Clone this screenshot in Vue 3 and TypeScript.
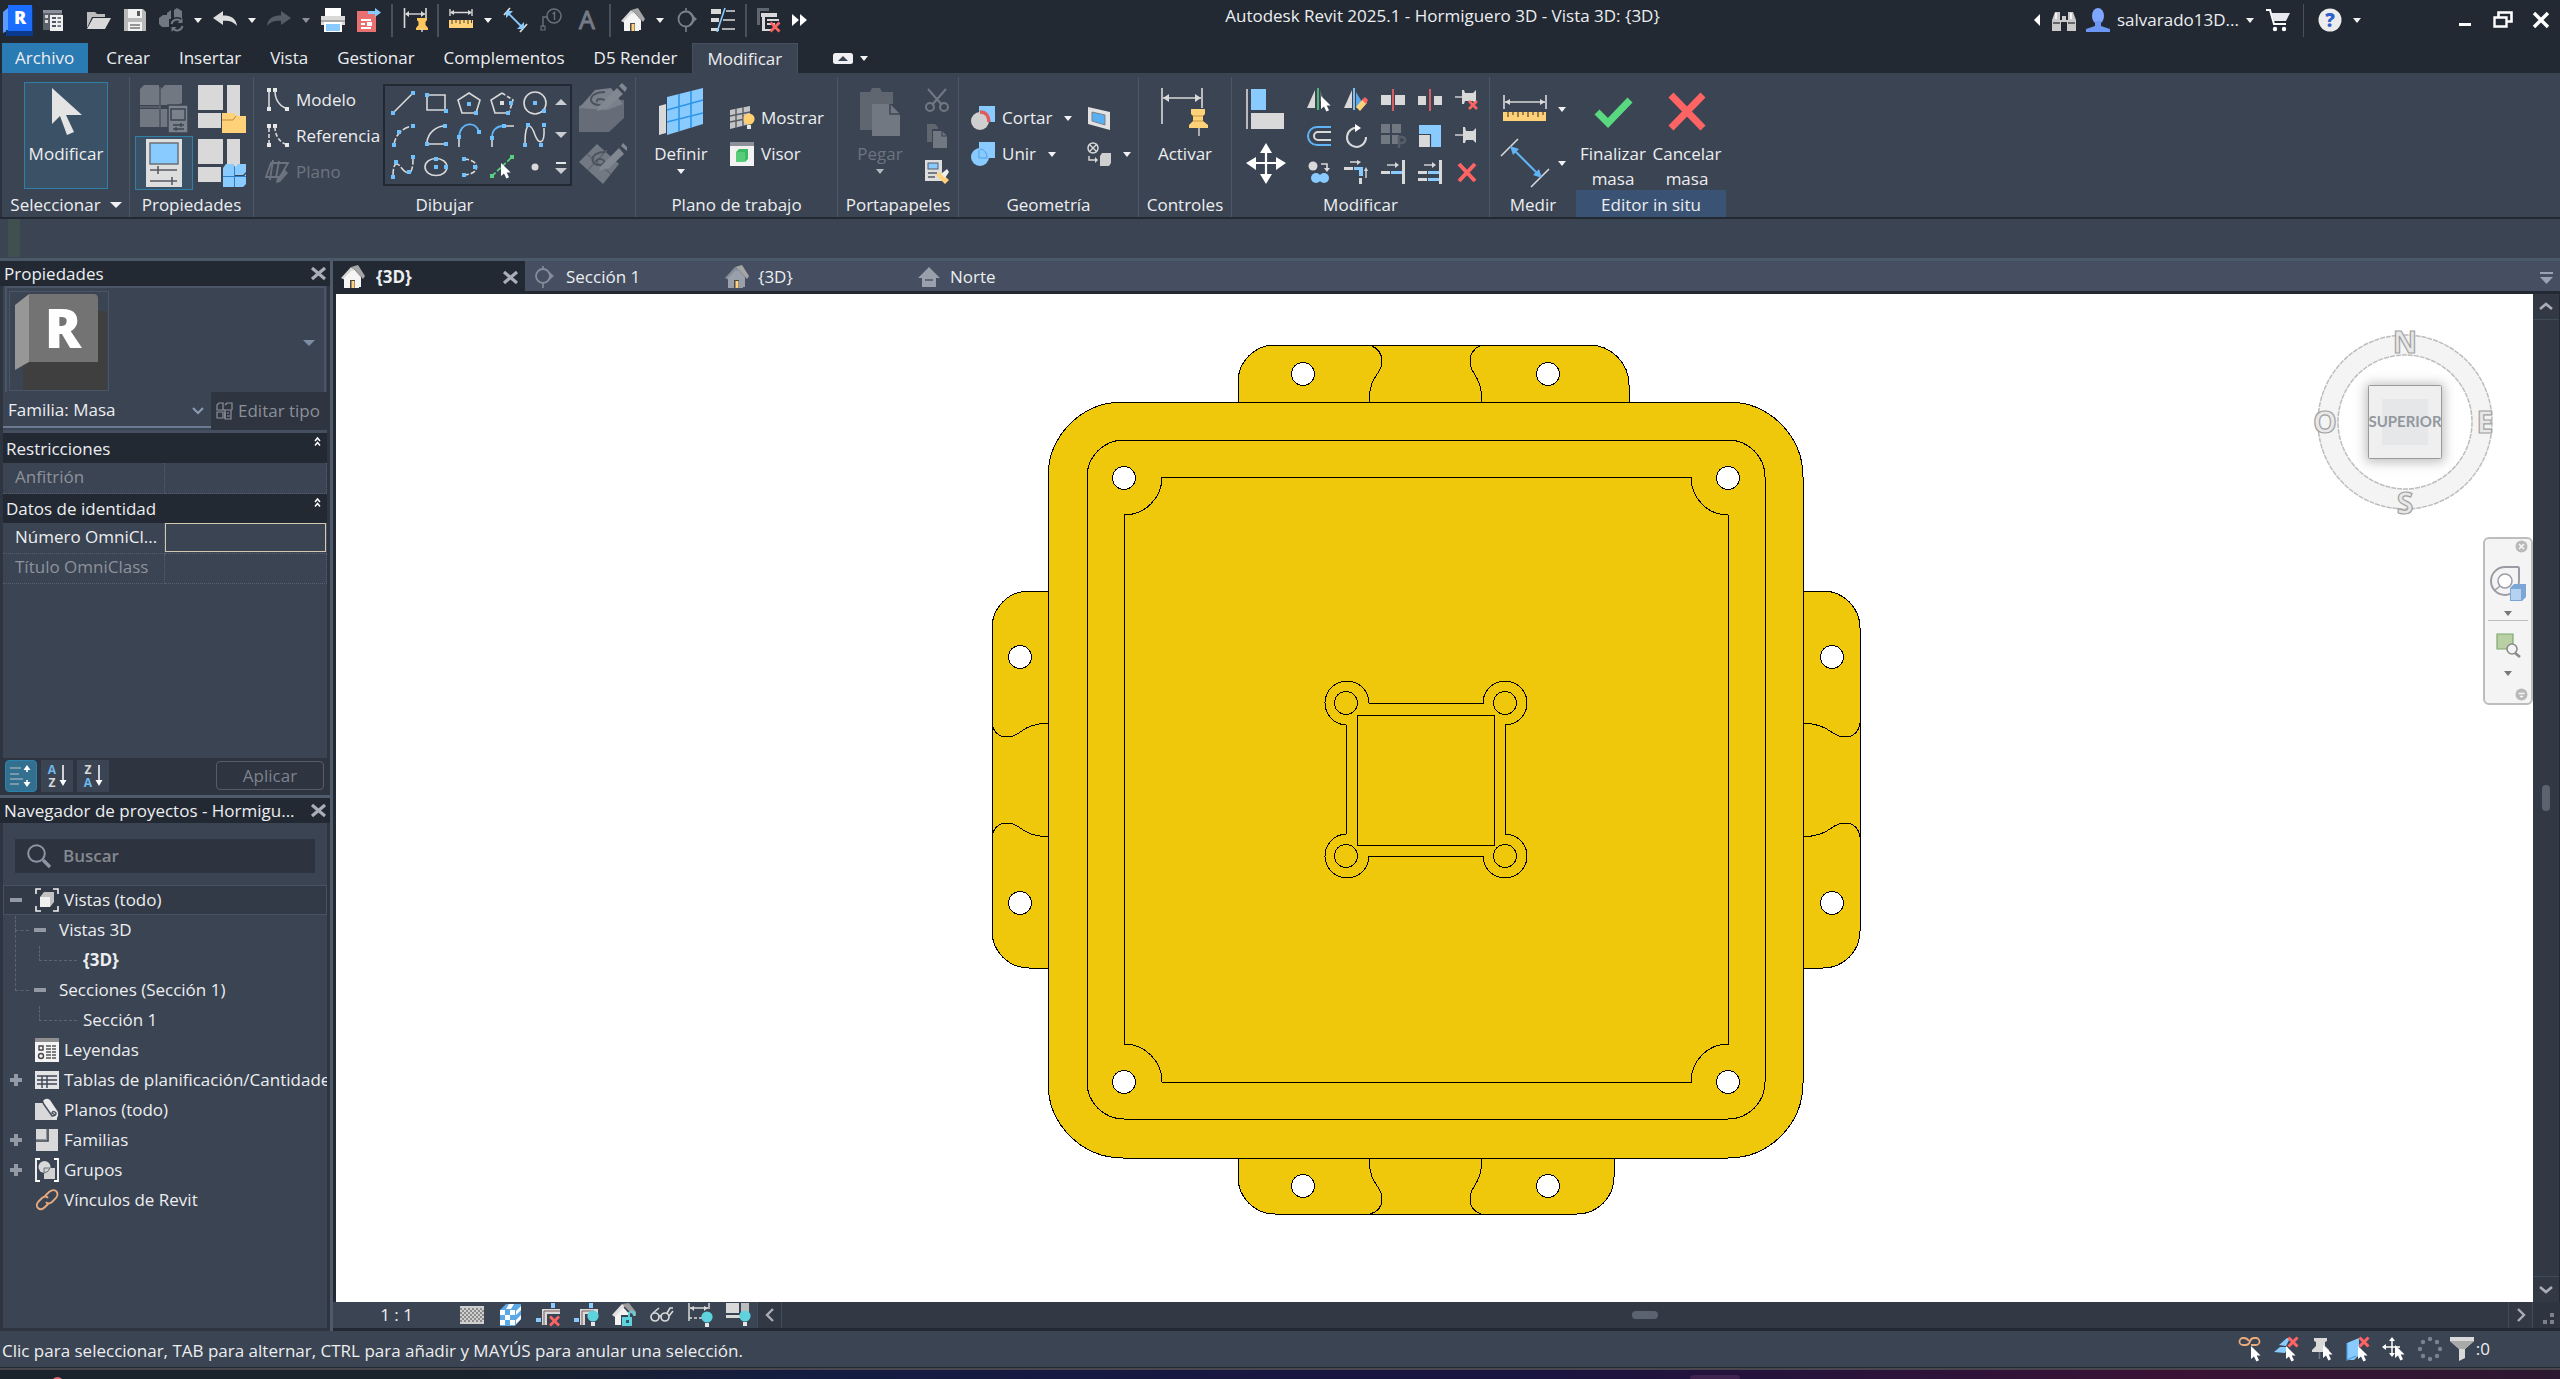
<script setup lang="ts">
import { h, ref } from 'vue'

interface Glyph { w: number; h: number; b: string }

const L = '#d9d9d9'
const B = '#8acbff'
const Y = '#ffd27a'
const R = '#ff6464'
const G = '#58d17c'
const D = '#727882'

const g = (b: string, w = 24, hh = 24): Glyph => ({ w, h: hh, b })
const line = (d: string, c = L, sw = 1.6, extra = '') =>
  `<path d="${d}" fill="none" stroke="${c}" stroke-width="${sw}" ${extra}/>`
const fill = (d: string, c = L) => `<path d="${d}" fill="${c}"/>`
const box = (x: number, y: number, w: number, hh: number, c = L) =>
  `<rect x="${x}" y="${y}" width="${w}" height="${hh}" fill="${c}"/>`
const dots = (pts: number[][], c = '#6fc0ff') => pts.map(([x, y]) => box(x - 2, y - 2, 4, 4, c)).join('')
const cross = (x: number, y: number, r: number, sw = 3) =>
  line(`M${x - r} ${y - r}L${x + r} ${y + r}M${x + r} ${y - r}L${x - r} ${y + r}`, R, sw)
const cursor = (x: number, y: number) =>
  `<path transform="translate(${x} ${y})" d="M0 0V13L3 10.4L5.4 15.4L8 14.2L5.7 9.4H9.6Z" fill="#fff"/>`
const bulb = (x: number, y: number, c = '#5fd3dd') =>
  `<circle cx="${x}" cy="${y}" r="5.6" fill="${c}"/>` + box(x - 2, y + 6, 4, 4, '#e6e6e6')
const house = (c1: string, c2: string) =>
  fill('M4 12L12 3L20 12V22H4Z', c1) + fill('M0 13L10 2L13 5L4 15Z', c2) + fill('M10 2L17 0L24 11L22 14L13 4Z', '#a5a5a5') +
  fill('M3 13L11 5L18 13V23H3Z', c1) + box(9, 15, 5, 8, '#4a4a4a') + box(10.5, 16, 3, 7, Y)
const cubes = (c: string, l: string) =>
  fill('M25 29L28 25H36V37H25Z', c) + fill('M37 29L40 25H48V33L45 36H37Z', c) + fill('M25 38H36V48H25Z', c) +
  fill('M37 38H45L48 35V45L45 48H37Z', c) + line('M25 37.5H48M36.5 27V48', l, 1)
const tiles = box(0, 0, 25, 25) + box(29, 0, 13, 31) + box(0, 28, 23, 15)
const dimension = (c: string) =>
  line('M1.5 0V20M23 0V12', c, 1.6) + line('M3 6H22', c, 1.4) + fill('M2 6L6 3V9ZM22 6L18 3V9Z', c)
const pin = (c: string) => fill('M14 10H24V12L22.500 14V17L25 20V22H13V20L15.500 17V14L14 12Z', c)
const ruler = box(0, 12, 24, 8, Y) + line('M3 12V16M7 12V15M11 12V16M15 12V15M19 12V16M22.500 12V15', '#4a4030', 1)

const icons: Record<string, Glyph> = {
  logo: g(
    fill('M0 8L6 3V26L0 29Z', '#5a9bff') + fill('M3 26H30V32H3Z', '#0a3a8c') + fill('M27 3H30V32H20Z', '#0a3a8c') + box(5, 1, 24, 26, '#1a6dff') +
      `<text x="17" y="20" font-family="Open Sans" font-size="18" font-weight="800" fill="#fff" text-anchor="middle">R</text>`, 30, 33),
  list: g(box(1, 2, 19, 20, '#5b626c') + box(1, 2, 19, 3, '#8b919b') + box(3, 7, 3, 3, L) + box(3, 12, 3, 3, L) + box(8, 7, 13, 16, '#f0f0f0') + line('M10 10H14M10 14H14M10 18H14', '#4f5560', 2) + line('M15.500 10H19M15.500 14H19M15.500 18H19', '#4f5560', 1.4)),
  open: g(fill('M0 4H8L10 6H18V9H5L0 20Z', '#bdbdbd') + fill('M6 10H24L18 21H0Z', L)),
  save: g(fill('M1 1H20L23 4V23H1Z', '#b9b9b9') + box(5, 1, 14, 9, '#f2f2f2') + box(14, 3, 3, 5, '#5b5b5b') + box(5, 14, 14, 9, '#f2f2f2') + line('M7 17H17M7 20H17', '#777', 1.4)),
  sync: g(fill('M0 10L4 7H10V19H3L0 16Z', D) + fill('M8 5L12 2V11H8Z', D) + fill('M15 2L18 0L23 3V12H15Z', D) + `<circle cx="18" cy="17" r="8" fill="#222933"/>` + line('M12.500 16A5.500 5.500 0 0 1 22 13.500M23.500 18A5.500 5.500 0 0 1 14 20.500', D, 2) + fill('M23.500 10V15H18.500ZM12.500 24V19H17.500Z', D)),
  undo: g(fill('M0 10L10 3V7.500C18 7.500 23 10 24 18C20 13.500 16 12.500 10 12.800V17Z', '#dcdcdc')),
  redo: g(fill('M24 10L14 3V7.500C6 7.500 1 10 0 18C4 13.500 8 12.500 14 12.800V17Z', '#565c66')),
  print: g(box(4, 0, 16, 8, '#fff') + box(0, 8, 24, 9, L) + line('M0 13H24', '#8b8b8b', 1.2) + box(3, 14, 18, 10, '#fff') + box(5, 16, 14, 7, B)),
  pdf: g(box(0, 3, 19, 21, '#e87070') + line('M4 12H14M4 16H8M4 20H14', '#fff', 2) + box(10, 14, 5, 4, '#fff') + fill('M11 3H18V0L24 4.500L18 9V6H11Z', B)),
  pinDim: g(dimension(L) + pin('#ffc65c') + line('M19 20V24', L, 1.4)),
  measure: g(line('M1 1V8M23 1V8M2 4.500H22', L, 1.4) + fill('M1 4.500L5 2V7ZM23 4.500L19 2V7Z') + ruler),
  dim: g(line('M1 7L7 0M17 24L24 16', L, 1.8) + line('M4 4L20 20', B, 1.8) + fill('M3 3H10L3 10ZM21 21H14L21 14Z', B)),
  tag: g(`<circle cx="15" cy="8" r="7" fill="none" stroke="#69707b" stroke-width="1.500"/>` + line('M13.500 6L15.500 4.500V12M8 9H4V19', '#69707b', 1.4) + line('M2 18H6V22H2Z', '#69707b', 1.2)),
  text: g(`<text x="12" y="21" font-family="Open Sans" font-size="25" fill="#757b85" stroke="#757b85" text-anchor="middle">A</text>`),
  house: g(house('#f5f5f5', '#d5d5d5')),
  houseDim: g(house('#9a9fac', '#868c9a')),
  section: g(`<circle cx="11" cy="11" r="7.500" fill="none" stroke="#7b818c" stroke-width="1.800"/>` + fill('M14 4L22 11L14 18Z', '#7b818c') + `<circle cx="11" cy="11" r="6" fill="#222933"/>` + line('M11 0V3M11 19V24', '#7b818c', 1.6)),
  sectionTab: g(`<circle cx="10" cy="11" r="7" fill="none" stroke="#868c9a" stroke-width="1.800"/>` + fill('M13 4L21 11L13 18L17 11Z', '#868c9a') + line('M10 1V4M10 18V23', '#868c9a', 1.6)),
  elev: g(fill('M12 2L23 13H19V22H5V13H1Z', '#9a9fac') + line('M8 15H16', '#454f61', 1.4)),
  thin: g(box(0, 1, 10, 5) + box(0, 10, 8, 4) + box(0, 20, 8, 3) + line('M15 3H24M12 12H24M11 21H24', L, 1.4) + line('M14 0L6 24', B, 1.6)),
  closeWin: g(box(0, 0, 12, 3, '#5f6670') + box(0, 3, 3, 14, '#5f6670') + box(4, 5, 16, 4) + box(5, 9, 3, 14) + line('M10 12H22M10 16H18M5 22H14', L, 2) + cross(18, 19, 4.5, 2.6)),
  more: g(fill('M0 6L7 12L0 18ZM8 6L15 12L8 18Z', '#fff'), 16, 24),
  binoc: g(fill('M3 4H8V12H10V8H14V12H16V4H21L24 12V23H15V14H9V23H0V12Z', '#c9c9c9') + line('M1 15H8M16 15H23', '#444', 1.6) + line('M4 5V11M19 5V11', '#fff', 1.6)),
  user: g(`<ellipse cx="12" cy="8" rx="6" ry="8" fill="#7ea6ff"/>` + fill('M9 13H15V18L24 21V24H0V21L9 18Z', '#6d97f5')),
  cart: g(line('M0 2H4L8 16H20', '#fff', 2) + fill('M5 5H24L20 13H8Z', '#e8e8f0') + `<circle cx="9" cy="21" r="2.200" fill="#fff"/><circle cx="18" cy="21" r="2.200" fill="#fff"/>`),
  help: g(`<circle cx="12" cy="12" r="11.500" fill="#ececec"/>` + `<text x="12" y="19" font-family="Open Sans" font-size="19" font-weight="800" fill="#2f62c9" text-anchor="middle">?</text>`),
  min: g(box(6, 15, 12, 3, '#fff')),
  restore: g(line('M7.500 9V4.500H20.500V13.500H16', '#fff', 2.6) + line('M3.500 9.500H15.500V18.500H3.500Z', '#fff', 2.4)),
  close: g(line('M5 5L19 19M19 5L5 19', '#fff', 3.4)),
  panelX: g(line('M1 1L14 12M14 1L1 12', '#a9adb6', 3.2), 15, 13),
  cam: g(`<rect x="0" y="1" width="20" height="11" rx="2.500" fill="#f0f0f4"/>` + fill('M5 9L10 4L15 9Z', '#3b4453'), 20, 13),

  select: g(fill('M10 0V36L18 28L25 47L32 44L24 27H40Z', '#e4e4e4'), 48, 48),
  typeProps: g(
    fill('M0 4L4 0H19V20H0Z', D) + fill('M21 4L25 0H42V18L38 20H21Z', D) + fill('M0 24H19V42H0Z', D) + fill('M21 24H36V42H21Z', D) + line('M0 22H20M20 2V42', '#5c636e', 1.5) +
      `<rect x="28" y="20" width="20" height="28" fill="#7c828c" stroke="#3b4453" stroke-width="1.500"/>` + line('M31 24H45V35H31Z', '#3b4453', 1.5) + line('M33 40H44M33 44H44M41 38V42M36 42V46', '#3b4453', 1.4), 48, 48),
  famCat: g(tiles + `<path d="M24 28H36L39 31H48V48H24Z" fill="${Y}"/>` + line('M24 35H35L38 31', '#b98c3d', 1), 48, 48),
  famTypes: g(tiles + cubes(B, '#2f7fc4'), 48, 48),
  props: g(box(6, 0, 36, 48, '#dedede') + `<rect x="10" y="4" width="28" height="21" fill="${B}" stroke="#6a7078" stroke-width="1.500"/>` + line('M10 31H37M10 42H37M18 27V35M32 38V46', '#555b63', 1.6), 48, 48),

  model: g(dots([[4, 2], [10, 2], [4, 21], [22, 21]], '#e8e8e8') + line('M4 4V19M10 3C10 12 15 18 20 20')),
  refl: g(dots([[4, 2], [10, 2], [4, 21], [22, 21]], '#e8e8e8') + line('M4 4V19M10 3C10 12 15 18 20 20', L, 1.6, 'stroke-dasharray="4 2"')),
  plane: g(line('M6 3H23L15 17H1ZM8 0L5 20M14 1L11 18', '#6d737e', 1.8) + fill('M12 18L20 10L23 13L15 22L11 23Z', '#6d737e')),

  gLine: g(line('M2 22L22 2') + dots([[2, 22], [22, 2]])),
  gRect: g(line('M3 4H21V19H3Z') + dots([[3, 4], [22, 20]])),
  gPoly: g(line('M12 2L23 9L19 22H5L1 9Z') + dots([[12, 13], [19, 22]])),
  gPoly2: g(line('M12 2L1 9L5 22H17') + line('M12 2L23 9L19 22', L, 1.6, 'stroke-dasharray="4 2"') + dots([[12, 12]], '#ddd') + dots([[21, 12], [18, 22]])),
  gCircle: g(`<circle cx="12" cy="12" r="11" fill="none" stroke="${L}" stroke-width="1.600"/>` + dots([[12, 12], [21, 20]])),
  gArc: g(line('M3 22C4 12 12 4 22 3', L, 1.6, 'stroke-dasharray="7 2"') + dots([[3, 22], [8, 9], [22, 3]])),
  gArc2: g(line('M3 19C4 10 12 3 21 3M3 21H22') + dots([[3, 21], [21, 3], [22, 21]])),
  gTan: g(line('M2 24V16') + line('M2 14C3 -2 20 -2 22 9', '#5fb4f5', 1.8) + dots([[2, 14], [22, 9]])),
  gFillet: g(line('M2 24V17M15 3H24') + line('M2 14C2 7 7 3 13 3', '#5fb4f5', 1.8) + dots([[2, 15], [14, 3]])),
  gSpline: g(line('M2 21C2 -6 9 3 12 12C15 20 22 24 21 5') + dots([[5, 2], [21, 2], [2, 22], [18, 22]])),
  gSpline2: g(line('M2 22C2 8 5 7 9 11C13 17 22 26 22 4', L, 1.6, 'stroke-dasharray="8 2"') + dots([[2, 22], [5, 7], [18, 17], [22, 2]])),
  gEllipse: g(`<ellipse cx="12" cy="12" rx="11" ry="8.500" fill="none" stroke="${L}" stroke-width="1.600"/>` + dots([[12, 12], [12, 4], [22, 12]])),
  gPart: g(line('M7 4C24 5 24 19 7 20', L, 1.6, 'stroke-dasharray="5 2"') + dots([[7, 4], [18, 12], [7, 20]])),
  gPick: g(line('M2 21L22 2', G, 1.8, 'stroke-dasharray="5 2"') + dots([[2, 21], [22, 2]], G) + cursor(11, 8)),
  gPoint: g(`<circle cx="12" cy="12" r="3.500" fill="${L}"/>`),
  face: g(fill('M0 22L14 16H45V34L30 48H0Z', '#676d78') + fill('M0 24L16 6L32 4L44 20L28 26Z', '#7b818b') + line('M26 8C8 8 8 22 22 21C34 16 16 12 18 18', '#4c535f', 2) + fill('M20 22L38 4L44 10L28 24L18 27Z', '#828892') + fill('M40 2L43 -1L48 4L46 8Z', '#828892'), 48, 48),
  wplane: g(fill('M0 20L18 2L40 22L24 42Z', '#737983') + line('M8 12L32 32M9 28L28 8', '#5c636e', 1.2) + line('M26 10C10 10 10 24 22 23C32 18 16 14 18 20', '#4c535f', 2) + fill('M22 24L40 6L45 12L30 26L20 29Z', '#828892') + fill('M42 4L44 1L48 5V9Z', '#828892'), 48, 48),

  define: g(fill('M1 18L8 16V45L1 47Z', L) + fill('M9 9L45 0V36L9 47Z', B) + line('M21 6V43M33 3V40M9 22L45 12M9 34L45 25', '#2f95e8', 1.6), 46, 48),
  show: g(fill('M0 4L20 0V18L0 23Z', '#c4c4c4') + line('M6 3V22M13 1V20M0 10L20 6M0 16L20 12', '#555b66', 1.4) + bulb(19, 13, '#ffcf70')),
  viewer: g(box(0, 0, 24, 24, '#f2f2f2') + box(0, 0, 24, 4, '#8b9099') + fill('M6 10L9 7H18V17L15 20H6Z', '#3dbb63') + fill('M6 10H15V20H6Z', '#57cd79')),
  paste: g(fill('M0 4H10L12 0H20L22 4H33V16H12V42H0Z', '#5f6670') + fill('M12 16H30L40 26V48H12Z', D) + line('M30 16V26H40', '#3b4453', 1.5), 40, 48),
  cut: g(line('M3 1L17 17M21 1L7 17', D, 2) + `<circle cx="5" cy="19" r="4" fill="none" stroke="${D}" stroke-width="2"/><circle cx="19" cy="19" r="4" fill="none" stroke="${D}" stroke-width="2"/>`),
  copy: g(fill('M2 0H10L13 3V5H7V18H2Z', '#5f6670') + fill('M8 7H17L22 12V24H8Z', D) + line('M17 7V12H22', '#3b4453', 1.2)),
  match: g(box(0, 0, 17, 21, '#dedede') + `<rect x="3" y="3" width="10" height="6" fill="${B}" stroke="#555b63"/>` + line('M3 13H12M3 17H10', '#555b63', 1.4) + fill('M11 15L15 12L24 20L20 24Z', Y) + fill('M16 14L22 9L24 12L20 18Z', '#eee')),
  cope: g(box(8, 0, 16, 16, B) + `<ellipse cx="9" cy="15" rx="9" ry="9" fill="#cfcfcf"/>` + line('M9 6C15 6 18 10 18 16', '#e05c5c', 3.4)),
  join: g(box(8, 0, 16, 16, B) + `<circle cx="9" cy="15" r="9" fill="${B}"/>` + line('M8 8V16H16C16 11 13 7 9 7', '#4aa0e6', 1)),
  split: g(fill('M1 1L23 6V24L1 18Z', '#e2e2e2') + fill('M5 6L18 9V19L5 15Z', '#58b0f2') + line('M5 6L18 9V19L5 15Z', '#7a8088', 1)),
  demolish: g(`<circle cx="6" cy="6" r="5" fill="none" stroke="${L}" stroke-width="1.500"/>` + line('M2 2L10 10M10 2L2 10M2 14V18H9', L, 1.4) + fill('M8 15L11 18L8 21Z') + fill('M13 14L15 11H24V21L22 24H13Z', '#cfcfcf')),
  activate: g(line('M1 0V36M41 0V20M2 10H40', L, 1.6) + fill('M2 10L8 6V14ZM40 10L34 6V14Z') + fill('M30 21H44V26L42 28V33L47 37V40H28V37L32 33V28L30 26Z', Y) + line('M32 28H42M32 33H42', '#c9983f', 1) + line('M38 40V48', L, 1.4), 48, 48),

  align: g(line('M1 0V40', L, 1.6) + box(5, 0, 15, 21, B) + box(5, 24, 33, 16, L), 40, 40),
  move: g(line('M20 8V33M8 20H33', '#fff', 2.2) + fill('M20 0L26 10H14ZM20 41L14 31H26ZM0 20L10 14V27ZM40 20L30 14V27Z', '#fff'), 40, 41),
  mirror: g(fill('M0 20L8 2V20Z', L) + line('M11 0V22', G, 1.6) + fill('M13 2L16 9L13 14Z', '#5f6670') + cursor(14, 8)),
  mirrorDraw: g(fill('M0 20L8 2V20Z', L) + line('M10 0V22', B, 1.8) + fill('M12 4L18 14L12 20Z', '#5aa9e6') + fill('M12 19L19 11L23 15L16 23Z', Y) + fill('M18 12L21 9L24 12L22 16Z', R)),
  splitEl: g(box(0, 7, 10, 10) + box(14, 7, 10, 10) + line('M12 1V23', R, 1.6)),
  splitGap: g(box(0, 8, 8, 9) + box(16, 8, 8, 9) + line('M12 1V23', R, 1.6)),
  unpin: g(line('M0 9H7', L, 1.4) + fill('M7 2H9L10 5H18L21 2V16L18 13H10L9 16H7Z') + cross(18, 17, 4, 2.6)),
  offset: g(line('M24 3H10A9 9 0 0 0 10 21H24', '#5fb4f5', 2) + line('M24 8H11A4 4 0 0 0 11 16H24', L, 2)),
  rotate: g(line('M14 4A9.500 9.500 0 1 0 22 13', L, 2) + fill('M11 0L17 4L11 8Z', '#fff')),
  array: g(box(0, 0, 9, 9, D) + box(11, 0, 9, 9, D) + box(0, 11, 9, 9, D) + box(11, 11, 7, 9, D) + line('M18 24V13H21A3 3 0 0 1 21 19H18', '#565c68', 2.6)),
  scale: g(box(1, 1, 22, 22, B) + box(1, 11, 11, 12, L) + line('M0 10.500H12.500V24', '#3b4453', 1.2)),
  pinEl: g(line('M0 11H8', L, 1.4) + fill('M8 3H10L11 7H18L21 4V19L18 16H11L10 19H8Z')),
  copyEl: g(`<circle cx="6" cy="6" r="4.500" fill="${L}"/>` + line('M14 4H20V9', L, 1.6) + fill('M17 8H23L20 12Z') + `<circle cx="9" cy="18" r="5" fill="${B}"/><circle cx="17" cy="18" r="5" fill="${B}"/>`),
  trim: g(box(0, 7, 9, 3) + box(10, 7, 9, 3, B) + box(15, 7, 4, 9, B) + box(15, 18, 3, 6) + line('M6 2H15M22 18V10', L, 1.4) + fill('M13 0L17 2L13 5ZM20 11L22 7L24 11Z')),
  extend: g(box(0, 11, 9, 3) + box(10, 11, 11, 3, B) + box(21, 0, 3, 24) + line('M6 5H15', L, 1.4) + fill('M14 2L18 5L14 8Z')),
  extendM: g(box(0, 11, 9, 3) + box(10, 11, 11, 3, B) + box(0, 18, 9, 3) + box(10, 18, 11, 3, B) + box(21, 0, 3, 24) + line('M6 5H15', L, 1.4) + fill('M14 2L18 5L14 8Z')),
  del: g(line('M4 4L20 21M20 4L4 21', R, 4)),
  ruler: g(line('M3 10V24M45 10V24M4 17H44', L, 1.6) + fill('M4 17L9 14V20ZM44 17L39 14V20Z') + box(2, 27, 43, 9, Y) + line('M7 27V32M12 27V30M17 27V32M22 27V30M27 27V32M32 27V30M37 27V32M42 27V30', '#57492c', 1.2), 48, 48),
  dimBig: g(line('M0 17L17 0M30 48L48 30', L, 1.6) + line('M11 9L39 37', '#5fb4f5', 2) + fill('M9 7L18 10L12 16ZM41 39L32 36L38 30Z', '#5fb4f5'), 48, 48),
  ok: g(line('M8 24L19 35L41 12', '#5ad880', 7), 48, 48),
  cancel: g(line('M8 7L40 40M40 7L8 40', R, 7), 48, 48),

  familyBig: g(
    fill('M10 19H95Q97 19 97 22V97Q97 100 94 100H17Q13 100 13 96V70Z', '#3f3f3f') + fill('M5 13L19 2V70L5 78Z', '#979797') + `<path d="M19 2H84Q88 2 88 7V70H19Z" fill="#737373"/>` +
      `<text x="53" y="56" font-family="Open Sans" font-size="54" font-weight="800" fill="#fff" text-anchor="middle">R</text>`, 100, 100),
  editType: g(line('M1 3L3 1H7V8H1ZM9 3L11 1H16V8M1 10H7V16H1ZM7 8H9M9 10V16', '#8d929b', 1.2) + line('M9 8H15V17H9ZM11 11H13M11 14H14', '#8d929b', 1.2), 17, 18),
  category: g(line('M1 4H12M1 10H10M1 15H14M1 20H10', '#8fa8b8', 1.4) + line('M18 3V8M18 16V21', '#fff', 1.6) + fill('M14.500 6L18 1L21.500 6ZM14.500 18L18 23L21.500 18Z', '#fff')),
  az: g(`<text x="7" y="10" font-family="Open Sans" font-size="12" font-weight="700" fill="#6fb7ec" text-anchor="middle">A</text><text x="7" y="23" font-family="Open Sans" font-size="12" font-weight="700" fill="#d9d9d9" text-anchor="middle">Z</text>` + line('M18 1V19', '#fff', 1.5) + fill('M14.500 16H21.500L18 22Z', '#fff')),
  za: g(`<text x="7" y="10" font-family="Open Sans" font-size="12" font-weight="700" fill="#d9d9d9" text-anchor="middle">Z</text><text x="7" y="23" font-family="Open Sans" font-size="12" font-weight="700" fill="#6fb7ec" text-anchor="middle">A</text>` + line('M18 1V19', '#fff', 1.5) + fill('M14.500 16H21.500L18 22Z', '#fff')),
  search: g(`<circle cx="9.500" cy="9.500" r="8.300" fill="none" stroke="#8f95a3" stroke-width="2"/>` + line('M16 16L23 23', '#8f95a3', 3.4)),

  views: g(line('M1 6V1H6M18 1H23V6M23 18V23H18M6 23H1V18', '#f0f0f0', 1.6) + fill('M5 9L9 4H19V14L15 19H5Z', '#c2c2c2') + box(5, 9, 10, 10, '#f0f0f0')),
  legend: g(box(0, 0, 24, 24, '#f4f4f4') + box(0, 0, 24, 4, '#8f8f8f') + line('M4 8H8V12H4Z', '#444', 1.4) + `<circle cx="6" cy="18" r="2.500" fill="none" stroke="#444" stroke-width="1.400"/>` + line('M11 8H21M11 11H21M11 14H21M11 17H21M11 20H21', '#555', 1.4, 'stroke-dasharray="5 1"')),
  sched: g(box(0, 3, 24, 18, '#e4e4e4') + line('M2 8H22M2 12H22M2 16H22M7 8V20M12 8V20', '#3b4453', 1.4)),
  sheets: g(fill('M0 5H10L22 19V22H0Z', L) + fill('M8 3Q11 -1 15 2L23 14Q24 20 19 22Z', '#e8e8e8') + line('M8 5L17 18Q21 18 21 15Q18 12 17 15L20 17', '#4a515d', 1.5)),
  fams: g(box(1, 1, 22, 22, L) + line('M1 13H13V1', '#3b4453', 1.6) + line('M1 11.500H11.500V1', '#8b9099', 1)),
  groups: g(line('M5 1H1V23H5M19 1H23V23H19', '#fff', 1.8) + `<circle cx="9.500" cy="9" r="6" fill="${L}"/>` + box(9, 10, 11, 11, '#d2d2d2') + line('M9 15V10H15Q14 14 9 15', '#6a7078', 1)),
  link: g(line('M10 8L14 4Q18 1 21 3Q24 6 21 10L17 14Q13 17 11 14M13 16L10 19Q6 23 3 20Q0 17 4 13L7 10Q11 7 13 10', '#e9ab7d', 1.8)),

  detail: g(box(0, 3, 24, 18, '#cfcfcf') + line('M0 6H24M0 10H24M0 14H24M0 18H24', '#8c8c8c', 2, 'stroke-dasharray="2 2"') + line('M2 8H24M2 12H24M2 16H24', '#8c8c8c', 2, 'stroke-dasharray="2 2"')),
  style: g(fill('M2 7L8 1H23V16L17 23H2Z', '#5aa9e6') + box(2, 7, 5, 5, '#fff') + box(12, 7, 5, 5, '#fff') + box(7, 12, 5, 5, '#fff') + box(2, 17, 5, 5, '#fff') + box(12, 17, 5, 5, '#fff') + fill('M11 1H16L13 6H8ZM18 8L23 3V7L18 12ZM18 17L23 12V16L18 21Z', '#fff')),
  sunOff: g(box(15, 0, 4, 5, B) + box(0, 15, 5, 4, B) + fill('M6 6H24V11H11V22H6Z', L) + line('M8 22V8H24', '#7a5a5a', 1) + cross(18.5, 18, 4.5, 2.8)),
  crop: g(box(15, 0, 4, 5, B) + box(0, 15, 5, 4, B) + fill('M6 6H24V11H11V22H6Z', L) + line('M8 22V8H20', '#7a5a5a', 1) + bulb(19, 13)),
  lock3d: g(fill('M3 13L11 4L19 13V22H3Z', '#f2f2f2') + fill('M0 12L10 1L13 3L3 14Z', '#e2e2e2') + fill('M10 1L17 0L24 9V13L21 12L12 3Z', '#9b9b9b') + fill('M9 12H22V24H9Z', '#3b4453') + box(10, 14, 10, 9, '#5fd3dd') + line('M17 14V10Q20 7 22 10V13', '#5fd3dd', 2) + box(14, 17, 3, 3, '#2c5a66')),
  glasses: g(`<circle cx="5" cy="14" r="4" fill="none" stroke="${L}" stroke-width="1.700"/><circle cx="15" cy="14" r="4" fill="none" stroke="${L}" stroke-width="1.700"/>` + line('M3 10L9 5M9 13H11M17 10L20 5H23M19 13L23 8', L, 1.6)),
  reveal: g(line('M1 0V18M21 0V6M2 5H20', L, 1.5) + line('M1 15H14', L, 1.5, 'stroke-dasharray="3 2"') + fill('M2 5L6 3V8ZM20 5L16 3V8Z') + bulb(19, 14)),
  constr: g(box(0, 0, 13, 10) + box(15, 0, 8, 12, '#bcbcbc') + box(0, 12, 14, 3) + bulb(19, 13)),
  left: g(line('M9 3L3 9L9 15', '#a9adb6', 2.4), 12, 18),
  right: g(line('M3 3L9 9L3 15', '#a9adb6', 2.4), 12, 18),
  up: g(line('M2 8L8 3L14 8', '#a9adb6', 2.6), 16, 11),
  down: g(line('M2 3L8 8L14 3', '#a9adb6', 2.6), 16, 11),
  chev: g(line('M1 2L6 7L11 2', '#8b9cb3', 2), 12, 9),
  dblUp: g(line('M1 4L3.500 1L6 4M1 8.500L3.500 5.500L6 8.500', '#fff', 1.5), 7, 9),
  grip: g(box(7, 0, 4, 4, '#7b8089') + box(0, 7, 4, 4, '#7b8089') + box(7, 7, 4, 4, '#7b8089'), 11, 11),
  tabMenu: g(box(0, 0, 13, 2, '#9aa1b2') + fill('M0 5H13L6.500 12Z', '#9aa1b2'), 13, 12),

  sLink: g(line('M11 4Q9 1 6 1H5A3.500 3.500 0 0 0 5 8H8Q11 8 12 4.500Q13 1 16 1H18A3.500 3.500 0 0 1 18 8H13', '#e9ab7d', 1.8) + cursor(13, 9)),
  sUnder: g(fill('M5 8L13 1H16L12 9ZM0 15L6 10H14L11 16Z', B) + cross(19, 5, 4.5, 3) + cursor(12, 9)),
  sPin: g(fill('M4 1H17V4L15 5V9L19 13V15H2V13L6 9V5L4 4Z') + line('M9.500 15V22', '#6e7480', 1.6) + cursor(13, 8)),
  sFace: g(fill('M1 6L13 1V18L8 23H1Z', B) + line('M1 6V23L10 19', '#4c9bd8', 1.2) + cross(18, 5, 4.5, 3) + cursor(12, 9)),
  sDrag: g(line('M10 2V18M2 10H18', '#fff', 1.5) + fill('M10 0L13 4H7ZM10 20L7 16H13ZM0 10L4 7V13Z', '#fff') + cursor(13, 8)),
  sBusy: g([[12, 2], [19, 5], [22, 12], [19, 19], [12, 22], [5, 19], [2, 12], [5, 5]].map(([x, y]) => `<circle cx="${x}" cy="${y}" r="2.200" fill="#7b8290"/>`).join('')),
  funnel: g(fill('M0 0H24V4L15 12V21L9 24V12L0 4Z', L) + fill('M0 4H24L15 12H9Z', '#a9a9a9')),

  navX: g(`<circle cx="6.500" cy="6.500" r="6" fill="#b9b9b9"/>` + line('M4 4L9 9M9 4L4 9', '#f6f6f6', 1.6), 13, 13),
  navMenu: g(`<circle cx="6.500" cy="6.500" r="6" fill="#b9b9b9"/>` + line('M3.500 5.500H9.500M5 8.500H8', '#f6f6f6', 1.6), 13, 13),
  wheel: g(line('M15 1H28Q29 1 29 3V15A14 14 0 1 1 15 1Z', '#9b9ba3', 2) + `<circle cx="15" cy="15" r="7" fill="#fff" stroke="#9b9ba3" stroke-width="1.500"/>` + fill('M20 22L24 18H36V31L32 35H20Z', '#7ba6d6') + box(21, 23, 10, 11, '#b5d2f0') + line('M4 25L10 20', '#9b9ba3', 1.5), 36, 36),
  zoomNav: g(box(1, 1, 16, 15, '#b9cfa4') + line('M1 1H17V16H1Z', '#7fa873', 1.2) + `<circle cx="16" cy="16" r="5" fill="#f4f4f4" stroke="#8b8b8b" stroke-width="1.600"/>` + line('M19 20L24 24', '#8b8b8b', 2.6)),
}

const Ico = (p: { n: string }) => {
  const i = icons[p.n]
  return h('svg', { class: 'ico', width: i.w, height: i.h, viewBox: `0 0 ${i.w} ${i.h}`, 'aria-hidden': 'true', innerHTML: i.b })
}
Ico.props = ['n']

interface Tool { k: 'btn' | 'dd' | 'sep' | 'dim' ; n?: string; t?: string }
const quick: Tool[] = [
  { k: 'btn', n: 'open', t: 'Abrir' }, { k: 'btn', n: 'save', t: 'Guardar' }, { k: 'btn', n: 'sync', t: 'Sincronizar' }, { k: 'dd' },
  { k: 'btn', n: 'undo', t: 'Deshacer' }, { k: 'dd' }, { k: 'btn', n: 'redo', t: 'Rehacer' }, { k: 'dim' },
  { k: 'btn', n: 'print', t: 'Imprimir' }, { k: 'btn', n: 'pdf', t: 'PDF' }, { k: 'sep' },
  { k: 'btn', n: 'pinDim', t: 'Activar controles' }, { k: 'sep' }, { k: 'btn', n: 'measure', t: 'Medir' }, { k: 'dd' },
  { k: 'btn', n: 'dim', t: 'Cota alineada' }, { k: 'btn', n: 'tag', t: 'Etiqueta' }, { k: 'btn', n: 'text', t: 'Texto' }, { k: 'sep' },
  { k: 'btn', n: 'house', t: 'Vista 3D' }, { k: 'dd' }, { k: 'btn', n: 'section', t: 'Sección' }, { k: 'btn', n: 'thin', t: 'Líneas finas' }, { k: 'sep' },
  { k: 'btn', n: 'closeWin', t: 'Cerrar ventanas' },
]
const menu = ['Crear', 'Insertar', 'Vista', 'Gestionar', 'Complementos', 'D5 Render']
const gallery = ['gLine', 'gRect', 'gPoly', 'gPoly2', 'gCircle', 'gArc', 'gArc2', 'gTan', 'gFillet', 'gSpline', 'gSpline2', 'gEllipse', 'gPart', 'gPick', 'gPoint']
const modify = ['mirror', 'mirrorDraw', 'splitEl', 'splitGap', 'unpin', 'offset', 'rotate', 'array', 'scale', 'pinEl', 'copyEl', 'trim', 'extend', 'extendM', 'del']
const viewTools = ['detail', 'style', 'sunOff', 'crop', 'lock3d', 'glasses', 'reveal', 'constr']
const statusTools = ['sLink', 'sUnder', 'sPin', 'sFace', 'sDrag', 'sBusy']

interface Node { t: string; level: number; sign?: '-' | '+'; icon?: string; bold?: boolean; on?: boolean; long?: boolean }
const tree: Node[] = [
  { t: 'Vistas (todo)', level: 0, sign: '-', icon: 'views', on: true },
  { t: 'Vistas 3D', level: 1, sign: '-' },
  { t: '{3D}', level: 2, bold: true },
  { t: 'Secciones (Sección 1)', level: 1, sign: '-', long: true },
  { t: 'Sección 1', level: 2 },
  { t: 'Leyendas', level: 0, icon: 'legend' },
  { t: 'Tablas de planificación/Cantidades', level: 0, sign: '+', icon: 'sched' },
  { t: 'Planos (todo)', level: 0, icon: 'sheets' },
  { t: 'Familias', level: 0, sign: '+', icon: 'fams' },
  { t: 'Grupos', level: 0, sign: '+', icon: 'groups' },
  { t: 'Vínculos de Revit', level: 0, icon: 'link' },
]

const holes = [
  [1303, 374], [1548, 374], [1303, 1186], [1548, 1186],
  [1020, 657], [1020, 903], [1832, 657], [1832, 903],
  [1124, 478], [1728, 478], [1124, 1082], [1728, 1082],
]
const bosses = [[1346, 703], [1505, 703], [1346, 856], [1505, 856]]
const query = ref('')
const omni = ref('')
</script>

<template>
  <div class="app">
    <header class="titlebar">
      <nav class="quick" aria-label="Acceso rápido">
        <button class="qb" aria-label="Revit"><Ico n="logo" /></button>
        <button class="qb start" aria-label="Inicio"><Ico n="list" /></button>
        <template v-for="(q, i) in quick" :key="i">
          <button v-if="q.k === 'btn'" class="qb" :aria-label="q.t"><Ico :n="q.n!" /></button>
          <span v-else-if="q.k === 'sep'" class="qsep"></span>
          <button v-else class="qdd" aria-label="Opciones"><i class="tri" :class="{ off: q.k === 'dim' }"></i></button>
        </template>
        <button class="qmore" aria-label="Más"><Ico n="more" /></button>
      </nav>
      <h1 class="title">Autodesk Revit 2025.1 - Hormiguero 3D - Vista 3D: {3D}</h1>
      <div class="account">
        <button class="qdd" aria-label="Contraer"><i class="tri west"></i></button>
        <button class="qb" aria-label="Buscar"><Ico n="binoc" /></button>
        <button class="user"><Ico n="user" /><span>salvarado13D...</span><i class="tri"></i></button>
        <button class="qb" aria-label="Tienda"><Ico n="cart" /></button>
        <span class="qsep thin"></span>
        <button class="qb" aria-label="Ayuda"><Ico n="help" /></button>
        <button class="qdd" aria-label="Opciones de ayuda"><i class="tri"></i></button>
        <div class="win">
          <button aria-label="Minimizar"><Ico n="min" /></button>
          <button aria-label="Restaurar"><Ico n="restore" /></button>
          <button aria-label="Cerrar"><Ico n="close" /></button>
        </div>
      </div>
    </header>

    <nav class="tabs">
      <button class="tab file">Archivo</button>
      <button v-for="m in menu" :key="m" class="tab">{{ m }}</button>
      <button class="tab current">Modificar</button>
      <button class="tab camera" aria-label="Minimizar cinta"><Ico n="cam" /><i class="tri"></i></button>
    </nav>

    <div class="ribbon">
      <section class="panel p-sel">
        <div class="body center"><button class="big on"><Ico n="select" /><span>Modificar</span></button></div>
        <h2>Seleccionar <i class="tri wide"></i></h2>
      </section>
      <section class="panel p-prop">
        <div class="body">
          <div class="four">
            <button aria-label="Propiedades de tipo"><Ico n="typeProps" /></button>
            <button aria-label="Categoría de familia"><Ico n="famCat" /></button>
            <button class="on" aria-label="Propiedades"><Ico n="props" /></button>
            <button aria-label="Tipos de familia"><Ico n="famTypes" /></button>
          </div>
        </div>
        <h2>Propiedades</h2>
      </section>
      <section class="panel p-draw">
        <div class="body">
          <div class="rows lines">
            <button class="row"><Ico n="model" /><span>Modelo</span></button>
            <button class="row"><Ico n="refl" /><span>Referencia</span></button>
            <button class="row" disabled><Ico n="plane" /><span>Plano</span></button>
          </div>
          <div class="gallery">
            <div class="cells"><button v-for="n in gallery" :key="n" :aria-label="n"><Ico :n="n" /></button></div>
            <div class="scroll">
              <button aria-label="Arriba"><i class="tri mid rise"></i></button>
              <button aria-label="Abajo"><i class="tri mid"></i></button>
              <button class="last" aria-label="Más"><i class="bar"></i><i class="tri mid"></i></button>
            </div>
          </div>
          <div class="faces">
            <button disabled aria-label="Dibujar en cara"><Ico n="face" /></button>
            <button disabled aria-label="Dibujar en plano"><Ico n="wplane" /></button>
          </div>
        </div>
        <h2>Dibujar</h2>
      </section>
      <section class="panel p-work">
        <div class="body">
          <button class="big"><Ico n="define" /><span>Definir</span><i class="tri"></i></button>
          <div class="rows two">
            <button class="row"><Ico n="show" /><span>Mostrar</span></button>
            <button class="row"><Ico n="viewer" /><span>Visor</span></button>
          </div>
        </div>
        <h2>Plano de trabajo</h2>
      </section>
      <section class="panel p-clip">
        <div class="body">
          <button class="big" disabled><Ico n="paste" /><span>Pegar</span><i class="tri soft"></i></button>
          <div class="rows">
            <button class="row" aria-label="Cortar"><Ico n="cut" /></button>
            <button class="row" aria-label="Copiar"><Ico n="copy" /></button>
            <button class="row" aria-label="Igualar propiedades"><Ico n="match" /></button>
          </div>
        </div>
        <h2>Portapapeles</h2>
      </section>
      <section class="panel p-geo">
        <div class="body">
          <div class="rows two first">
            <button class="row"><Ico n="cope" /><span>Cortar</span><i class="tri"></i></button>
            <button class="row"><Ico n="join" /><span>Unir</span><i class="tri"></i></button>
          </div>
          <div class="rows two">
            <button class="row" aria-label="Dividir cara"><Ico n="split" /></button>
            <button class="row" aria-label="Derribar"><Ico n="demolish" /><i class="tri"></i></button>
          </div>
        </div>
        <h2>Geometría</h2>
      </section>
      <section class="panel p-ctl">
        <div class="body center"><button class="big"><Ico n="activate" /><span>Activar</span></button></div>
        <h2>Controles</h2>
      </section>
      <section class="panel p-mod">
        <div class="body">
          <div class="pair">
            <button aria-label="Alinear"><Ico n="align" /></button>
            <button aria-label="Desplazar"><Ico n="move" /></button>
          </div>
          <div class="grid5"><button v-for="n in modify" :key="n" :aria-label="n"><Ico :n="n" /></button></div>
        </div>
        <h2>Modificar</h2>
      </section>
      <section class="panel p-med">
        <div class="body">
          <div class="pair dd">
            <button aria-label="Medir"><Ico n="ruler" /><i class="tri"></i></button>
            <button aria-label="Cota"><Ico n="dimBig" /><i class="tri"></i></button>
          </div>
        </div>
        <h2>Medir</h2>
      </section>
      <section class="panel p-edit">
        <div class="body">
          <button class="big"><Ico n="ok" /><span>Finalizar<br />masa</span></button>
          <button class="big"><Ico n="cancel" /><span>Cancelar<br />masa</span></button>
        </div>
        <h2>Editor in situ</h2>
      </section>
    </div>
    <div class="options"><span></span></div>

    <div class="work">
      <aside class="side">
        <section class="dock">
          <header class="dockhead"><h2>Propiedades</h2><button aria-label="Cerrar"><Ico n="panelX" /></button></header>
          <div class="dockbody">
            <div class="typebox"><span class="thumb"><Ico n="familyBig" /></span><i class="tri type"></i></div>
            <div class="family">
              <label class="pick">
                <select aria-label="Familia"><option>Familia: Masa</option></select>
                <Ico n="chev" />
              </label>
              <button class="edit" disabled><Ico n="editType" /><span>Editar tipo</span></button>
            </div>
            <table class="props">
              <tbody>
                <tr class="grp"><th colspan="2">Restricciones<Ico n="dblUp" /></th></tr>
                <tr class="dimrow"><td>Anfitrión</td><td></td></tr>
                <tr class="grp"><th colspan="2">Datos de identidad<Ico n="dblUp" /></th></tr>
                <tr><td><label for="omni">Número OmniCl...</label></td><td class="field"><input id="omni" v-model="omni" type="text" /></td></tr>
                <tr class="dimrow"><td>Título OmniClass</td><td></td></tr>
              </tbody>
            </table>
          </div>
          <footer class="sorts">
            <button class="on" aria-label="Por categoría"><Ico n="category" /></button>
            <button aria-label="Ascendente"><Ico n="az" /></button>
            <button aria-label="Descendente"><Ico n="za" /></button>
            <button class="apply" disabled>Aplicar</button>
          </footer>
        </section>
        <section class="dock browser">
          <header class="dockhead"><h2>Navegador de proyectos - Hormigu...</h2><button aria-label="Cerrar"><Ico n="panelX" /></button></header>
          <div class="dockbody">
            <label class="search"><Ico n="search" /><input v-model="query" type="text" placeholder="Buscar" aria-label="Buscar" /></label>
            <ul class="tree">
              <li v-for="n in tree" :key="n.t" :class="['l' + n.level, { on: n.on, bold: n.bold, long: n.long }]">
                <span v-if="n.level < 2" class="sign" :class="{ plus: n.sign === '+', minus: n.sign === '-' }"></span>
                <Ico v-if="n.icon" :n="n.icon" />
                <span class="name">{{ n.t }}</span>
              </li>
            </ul>
          </div>
        </section>
      </aside>

      <main class="view">
        <nav class="doctabs">
          <button class="doc active"><Ico n="house" /><span>{3D}</span><Ico n="panelX" /></button>
          <button class="doc"><Ico n="sectionTab" /><span>Sección 1</span></button>
          <button class="doc"><Ico n="houseDim" /><span>{3D}</span></button>
          <button class="doc"><Ico n="elev" /><span>Norte</span></button>
          <button class="docmenu" aria-label="Lista de vistas"><Ico n="tabMenu" /></button>
        </nav>
        <div class="stage">
          <div class="canvas">
            <svg class="model" viewBox="336 294 2197 1008" role="img" aria-label="Hormiguero 3D">
              <g fill="#efc80b" stroke="#000" stroke-width="1" shape-rendering="crispEdges">
                <path d="M1238 402V382A37 37 0 0 1 1275 345H1589A40 40 0 0 1 1629 385V402Z" />
                <path d="M1238 1158V1177A37 37 0 0 0 1275 1214H1577A37 37 0 0 0 1614 1177V1158Z" />
                <path d="M1048 591H1029A37 37 0 0 0 992 628V931A37 37 0 0 0 1029 968H1048Z" />
                <path d="M1803 591H1823A37 37 0 0 1 1860 628V931A37 37 0 0 1 1823 968H1803Z" />
                <rect x="1048" y="402" width="755" height="756" rx="75" />
                <rect x="1087" y="440" width="678" height="679" rx="37" />
                <path d="M1162 477H1691A37 38 0 0 0 1728 515V1044A37 38 0 0 0 1691 1082H1162A38 38 0 0 0 1124 1044V515A38 38 0 0 0 1162 477Z" />
                <path d="M1369 703H1483A22 22 0 1 1 1505 725V834A22 22 0 1 1 1483 856H1369A22 22 0 1 1 1346 834V725A22 22 0 1 1 1369 703Z" />
                <rect x="1357" y="715" width="137" height="130" />
                <circle v-for="b in bosses" :key="b.join()" :cx="b[0]" :cy="b[1]" r="11.5" />
                <g fill="none">
                  <path d="M1369 402C1370 372 1382 376 1382 361C1382 353 1377 348 1370 345" />
                  <path d="M1482 402C1481 372 1470 376 1470 361C1470 353 1475 348 1481 345" />
                  <path d="M1369 1158C1370 1188 1382 1184 1382 1199C1382 1207 1377 1212 1370 1214" />
                  <path d="M1482 1158C1481 1188 1470 1184 1470 1199C1470 1207 1475 1212 1481 1214" />
                  <path d="M1048 723C1018 725 1022 737 1007 737C998 737 993 731 992 723" />
                  <path d="M1048 837C1018 835 1022 823 1007 823C998 823 993 829 992 837" />
                  <path d="M1803 723C1833 725 1830 737 1845 737C1854 737 1859 731 1860 723" />
                  <path d="M1803 837C1833 835 1830 823 1845 823C1854 823 1859 829 1860 837" />
                </g>
                <circle v-for="c in holes" :key="c.join()" :cx="c[0]" :cy="c[1]" r="11.5" fill="#fff" />
              </g>
            </svg>
            <svg class="cube" width="220" height="220" viewBox="-15 -15 220 220" role="img" aria-label="ViewCube">
              <defs><filter id="sh" x="-40%" y="-40%" width="180%" height="180%"><feGaussianBlur stdDeviation="6" /></filter></defs>
              <circle cx="95" cy="95" r="77" fill="none" stroke="#f4f4f4" stroke-width="20" />
              <circle cx="95" cy="95" r="87" fill="none" stroke="#bdbdbd" stroke-width="1.500" stroke-dasharray="5 1" />
              <circle cx="95" cy="95" r="67" fill="none" stroke="#bdbdbd" stroke-width="1.500" stroke-dasharray="5 1" />
              <rect x="56" y="57" width="78" height="78" fill="#bbb" filter="url(#sh)" />
              <rect x="58.500" y="58.500" width="73" height="73" rx="1" fill="#efefef" stroke="#9a9a9a" />
              <rect x="72" y="72" width="46" height="46" fill="#e5e7e9" />
              <text class="face" x="95" y="100">SUPERIOR</text>
              <g class="wind">
                <text x="95" y="26">N</text><text x="95" y="187">S</text><text x="15" y="106">O</text><text x="175" y="106">E</text>
              </g>
            </svg>
            <div class="navbar">
              <button class="end" aria-label="Cerrar"><Ico n="navX" /></button>
              <button class="whl" aria-label="Rueda de navegación"><Ico n="wheel" /><i class="tri gray"></i></button>
              <button class="zm" aria-label="Zoom"><Ico n="zoomNav" /><i class="tri gray"></i></button>
              <button class="end" aria-label="Personalizar"><Ico n="navMenu" /></button>
            </div>
          </div>
          <div class="vscroll"><button aria-label="Arriba"><Ico n="up" /></button><div class="vtrack"><span></span></div><button aria-label="Abajo"><Ico n="down" /></button></div>
        </div>
        <div class="vcb">
          <button class="ratio">1 : 1</button>
          <button v-for="n in viewTools" :key="n" class="vt" :aria-label="n"><Ico :n="n" /></button>
          <button class="hb" aria-label="Izquierda"><Ico n="left" /></button>
          <div class="htrack"><span></span></div>
          <button class="hb" aria-label="Derecha"><Ico n="right" /></button>
          <span class="corner"><Ico n="grip" /></span>
        </div>
      </main>
    </div>

    <footer class="status">
      <p>Clic para seleccionar, TAB para alternar, CTRL para añadir y MAYÚS para anular una selección.</p>
      <div class="stools">
        <button v-for="n in statusTools" :key="n" :aria-label="n"><Ico :n="n" /></button>
        <button class="filter"><Ico n="funnel" /><span>:0</span></button>
      </div>
    </footer>
    <div class="desk"><i class="red"></i><i class="lit"></i></div>
  </div>
</template>

<style>
body { margin: 0; background: #222933; }
</style>

<style scoped>
* { box-sizing: border-box; }
.app { display: flex; flex-direction: column; height: 100vh; min-height: 900px; overflow: hidden; background: #222933; color: #eceef0; font: 17px/24px "Open Sans", "Noto Sans", sans-serif; }
button, input, select { font: inherit; color: inherit; background: none; border: 0; padding: 0; margin: 0; }
button { display: flex; align-items: center; justify-content: center; white-space: nowrap; }
h1, h2, p, ul { margin: 0; padding: 0; font: inherit; list-style: none; }
.ico { display: block; flex: none; overflow: visible; }
.tri { display: block; flex: none; width: 0; height: 0; border: 4px solid transparent; border-top: 5px solid #f2f2f2; border-bottom: 0; }
.tri.off { border-top-color: #8c9199; }
.tri.soft { border-top-color: #b4b8be; }
.tri.west { border: 6px solid transparent; border-right: 6px solid #fff; border-left: 0; }
.tri.wide { border-width: 6px 6px 0; }
.tri.mid { border-width: 6px 6px 0; border-top-color: #c9ccd1; }
.tri.rise { transform: rotate(180deg); }
.tri.gray { border-top-color: #77777c; }

.titlebar { display: flex; flex: none; height: 43px; padding-bottom: 3px; align-items: center; }
.quick, .account { display: flex; align-items: center; flex: none; height: 40px; }
.qb { width: 36px; height: 36px; }
.start { margin-right: 9px; }
.qdd { width: 18px; height: 36px; }
.qsep { width: 2px; height: 33px; margin: 0 4px; background: #48505c; }
.qsep.thin { width: 1px; margin: 0 8px 0 7px; }
.qmore { width: 26px; height: 36px; }
.title { flex: 1; text-align: center; padding: 0 0 8px 44px; white-space: nowrap; overflow: hidden; }
.user { gap: 7px; margin: 0 6px 0 4px; height: 36px; }
.win { display: flex; margin-left: 80px; }
.win button { width: 38px; height: 36px; }

.tabs { display: flex; flex: none; height: 30px; }
.tab { padding: 0 15px 0 14px; height: 30px; }
.file { margin: 0 4px 0 2px; padding: 0 14px 0 13px; background: #2a7ab3; }
.current { background: #3b4453; border: 1px solid #454f60; border-bottom: 0; }
.camera { gap: 7px; margin-left: 21px; }

.ribbon { display: flex; flex: none; height: 146px; padding: 4px 0 0 3px; background: #3b4453; border-bottom: 2px solid #222933; box-shadow: inset 2px 0 #2b323e; }
.panel { display: flex; flex-direction: column; flex: none; border-right: 1px solid #4b5666; }
.panel h2 { height: 27px; line-height: 27px; padding-top: 2px; display: flex; justify-content: center; align-items: center; gap: 9px; white-space: nowrap; }
.body { display: flex; height: 113px; padding-top: 5px; align-items: flex-start; }
.center { justify-content: center; }
.p-sel { width: 127px; }
.p-prop { width: 124px; }
.p-draw { width: 382px; }
.p-work { width: 202px; }
.p-clip { width: 121px; }
.p-geo { width: 180px; }
.p-ctl { width: 93px; }
.p-mod { width: 258px; }
.p-med { width: 86px; border: 0; }
.p-edit { width: 150px; border: 0; }
.p-edit h2 { background: #3a5274; }
.big { flex-direction: column; justify-content: flex-start; width: 74px; height: 107px; padding-top: 5px; line-height: 25px; border: 1px solid transparent; }
.big span { margin-top: 5px; }
.big .tri { margin-top: 3px; }
.big.on { width: 84px; background: #3b5166; border-color: #2f7fa6; }
button:disabled { color: #6d747f; }
.four { display: grid; grid-template-columns: 58px 58px; grid-auto-rows: 54px; margin-left: 5px; }
.four .on { background: #3b5166; border: 1px solid #2f7fa6; }
.rows { display: flex; flex-direction: column; padding-left: 4px; }
.row { height: 36px; padding: 0 4px; gap: 7px; justify-content: flex-start; }
.lines { padding-left: 7px; width: 129px; }
.two { padding-top: 18px; }
.p-work .rows { padding-left: 8px; }
.p-work .big { margin-left: 8px; }
.p-clip .big { margin-left: 5px; }
.p-clip .rows { padding-left: 4px; }
.p-geo .rows { padding-left: 0; }
.p-geo .first { width: 116px; margin-left: 8px; }
.p-geo .tri { margin-left: 5px; }
.gallery { display: flex; height: 102px; margin-top: 2px; border: 2px solid #222933; }
.cells { display: grid; grid-template-columns: repeat(5, 33px); grid-auto-rows: 32px; padding: 1px; }
.scroll { display: flex; flex-direction: column; width: 18px; }
.scroll button { flex: 1; }
.scroll .last { flex-direction: column; gap: 4px; }
.bar { width: 10px; height: 2px; background: #e6e6e6; }
.faces { display: flex; flex-direction: column; gap: 10px; margin: 2px 0 0 7px; }
.pair { display: grid; grid-template-columns: 60px; grid-auto-rows: 54px; margin: 0 4px; }
.pair.dd { grid-template-columns: auto; margin: 0 0 0 11px; }
.pair.dd button { gap: 9px; }
.grid5 { display: grid; grid-template-columns: repeat(5, 37px); grid-auto-rows: 36px; }

.options { flex: none; height: 42px; background: #3b4453; border-bottom: 3px solid #4b5868; }
.options span { display: block; width: 12px; height: 38px; margin-left: 8px; background: #40504f; }

.work { display: flex; flex: 1; min-height: 0; }
.side { display: grid; grid-template-rows: minmax(0, 537fr) minmax(0, 533fr); width: 333px; flex: none; border-right: 3px solid #4f5b6a; }
.dock { display: flex; flex-direction: column; min-width: 0; min-height: 0; background: #2e3440; border-bottom: 3px solid #4f5b6a; }
.browser { border-color: #2e3440; }
.dockhead { display: flex; flex: none; justify-content: space-between; height: 25px; padding: 0 4px; background: #222933; }
.dockhead h2 { white-space: nowrap; line-height: 26px; }
.dockbody { flex: 1; min-height: 0; margin: 0 3px; background: #3b4453; overflow: hidden; }
.typebox { display: flex; align-items: flex-start; height: 106px; margin: 0 1px 0 2px; padding: 3px 9px 0 2px; border: 1px solid #4a5667; border-width: 2px 2px 0; }
.thumb { border: 1px solid #4a5667; width: 100px; height: 100px; overflow: hidden; }
.tri.type { margin: 49px 0 0 auto; border-width: 6px 6px 0; border-top-color: #7e8ca5; }
.family { display: flex; height: 41px; border-bottom: 3px solid #454f5f; }
.pick { display: flex; align-items: center; width: 208px; height: 36px; padding: 2px 7px 0 5px; border-bottom: 2px solid #6b7a90; }
.pick select { appearance: none; flex: 1; height: 32px; outline: 0; }
.edit { flex: 1; gap: 5px; background: #2e3440; justify-content: flex-start; padding-left: 5px; }
.edit:disabled { color: #8b9099; }
.props { width: 100%; border-collapse: collapse; table-layout: fixed; }
.props td, .props th { height: 30px; padding: 2px 0 0; font-weight: 400; text-align: left; line-height: 24px; }
.props td { border: 1px dotted #545f6f; border-left: 0; border-top: 0; padding: 0 0 2px 12px; white-space: nowrap; }
.props .grp th { background: #222933; padding-left: 3px; position: relative; }
.grp .ico { position: absolute; right: 6px; top: 4px; }
.dimrow td { color: #8d929b; }
.props .field { padding: 0; }
.field input { display: block; width: 100%; height: 29px; border: 1px solid #d3c8b0; outline: 0; padding: 0 4px; }
.sorts { display: flex; flex: none; height: 37px; padding: 2px 6px 0 5px; gap: 4px; }
.sorts button { width: 32px; height: 32px; background: #3b4453; }
.sorts .on { background: #33708f; border: 1px solid #2a83b0; border-radius: 4px; }
.sorts .apply { width: 108px; height: 29px; margin: 1px 0 0 auto; background: none; border: 1px solid #565d69; border-radius: 4px; color: #7e838c; }
.search { display: flex; align-items: center; gap: 12px; height: 34px; margin: 16px 12px 12px; padding-left: 12px; background: #2d333f; }
.search input { flex: 1; min-width: 0; outline: 0; font-weight: 600; }
.search input::placeholder { color: #858a91; opacity: 1; }
.tree li { position: relative; display: flex; align-items: center; height: 30px; white-space: nowrap; border: 1px solid transparent; }
.tree .on { background: #333a47; border-color: #465262; }
.tree .l1 { padding-left: 24px; }
.tree .l2 { padding-left: 79px; }
.bold { font-weight: 700; }
.sign { position: relative; width: 25px; height: 20px; margin-right: 6px; flex: none; }
.tree .ico { margin-right: 5px; }
.sign.minus::before, .sign.plus::before, .sign.plus::after { content: ""; position: absolute; left: 6px; top: 8px; width: 12px; height: 4px; background: #9298a4; }
.sign.plus::after { transform: rotate(90deg); }
.l1::before, .l2::before { content: ""; position: absolute; left: 11px; top: 0; width: 13px; height: 14px; border: 1px dashed #5d6470; border-width: 0 0 1px 1px; }
.long::before { top: -46px; height: 60px; }
.l2::before { left: 35px; width: 37px; }

.view { display: flex; flex-direction: column; flex: 1; min-width: 0; background: #222933; }
.doctabs { display: flex; flex: none; height: 30px; background: #454f61; }
.doc { width: 192px; padding: 2px 0 0 8px; gap: 9px; justify-content: flex-start; }
.doc.active { background: #222933; font-weight: 700; gap: 11px; }
.doc.active .ico:last-child { margin: 0 7px 0 auto; }
.docmenu { margin: 3px 7px 0 auto; }
.stage { display: flex; flex: 1; min-height: 0; border: solid #222933; border-width: 3px 1px 0 3px; }
.canvas { position: relative; flex: 1; min-width: 0; background: #fff; }
.model { display: block; width: 100%; height: 100%; }
.cube { position: absolute; right: 18px; top: 18px; }
.face { font: 700 15px "Liberation Sans Narrow", Lato, sans-serif; fill: #92989e; text-anchor: middle; }
.wind { font: 700 30px "Open Sans", sans-serif; fill: #e8e8e8; stroke: #a2a2a2; stroke-width: 1.2; text-anchor: middle; }
.navbar { position: absolute; right: 0; top: 243px; width: 50px; height: 168px; display: flex; flex-direction: column; background: #f4f4f4; border: 2px solid #bdbdbd; border-radius: 6px; }
.navbar .end { height: 15px; margin-left: 27px; }
.navbar .end + .whl { margin-top: 3px; }
.whl { flex-direction: column; gap: 9px; padding-top: 4px; margin: 0 3px; border-bottom: 1px solid #bdbdbd; height: 64px; }
.zm { flex-direction: column; gap: 14px; height: 66px; }
.vscroll { display: flex; flex-direction: column; width: 26px; flex: none; background: #323844; }
.vscroll button { height: 26px; border-bottom: 1px solid #3f4c5b; }
.vscroll button:last-child { border: 0; border-top: 1px solid #3f4c5b; }
.vtrack { display: flex; flex: 1; align-items: center; justify-content: center; }
.vtrack span { width: 8px; height: 26px; border-radius: 4px; background: #5b6371; }
.vcb { display: flex; flex: none; height: 29px; padding-left: 3px; border-bottom: 3px solid #222933; background: #3b4453; }
.ratio { width: 117px; padding-left: 4px; }
.vt { width: 38px; }
.hb { width: 25px; background: #323844; border: solid #3f4c5b; border-width: 0 1px; }
.htrack { display: flex; flex: 1; align-items: center; justify-content: center; background: #323844; }
.htrack span { width: 26px; height: 8px; border-radius: 4px; background: #5b6371; }
.corner { display: flex; align-items: flex-end; justify-content: center; width: 27px; padding: 0 0 4px 4px; background: #2e3440; }

.status { display: flex; flex: none; justify-content: space-between; align-items: center; height: 36px; background: #3b4453; padding: 0 70px 0 2px; }
.status p { padding-top: 4px; white-space: nowrap; }
.stools { display: flex; height: 36px; }
.stools button { width: 36px; }
.stools .filter { width: auto; gap: 2px; margin-left: 2px; }
.desk { position: relative; flex: none; height: 12px; border-top: 1px solid #222933; background: linear-gradient(90deg, #1a232b 0, #1a232b 18%, #141c42 32%, #1a1440 60%, #3a1235 85%, #2c1830 100%); box-shadow: inset 0 2px #4a464e; overflow: hidden; }
.red { position: absolute; left: 51px; top: 9px; width: 13px; height: 13px; border-radius: 7px; background: #e0646e; }
.lit { position: absolute; left: 66%; top: 7px; width: 50px; height: 8px; border-radius: 4px; background: #3f2450; }
</style>
